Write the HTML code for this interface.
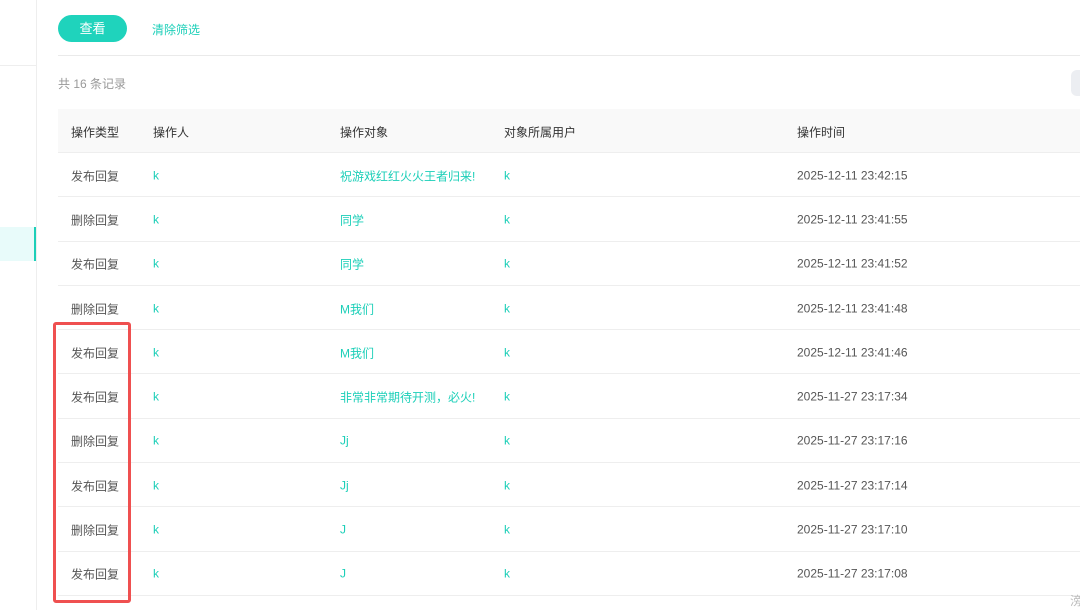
<!DOCTYPE html>
<html><head><meta charset="utf-8"><style>
*{margin:0;padding:0;box-sizing:border-box}
body{width:1080px;height:610px;background:#fff;font-family:"Liberation Sans","Noto Sans CJK SC",sans-serif;font-size:12px;color:#555;position:relative;overflow:hidden}
.side{position:absolute;left:0;top:0;width:37px;height:610px;border-right:1px solid #eee}
.side .hl{position:absolute;left:0;top:65px;width:36px;border-top:1px solid #eee}
.side .sel{position:absolute;left:0;top:227px;width:36px;height:34px;background:#e8fbfa;border-right:2px solid #1ccfb8}
.btn{position:absolute;left:58px;top:15px;width:69px;height:27px;border-radius:14px;background:#1fd3bc;color:#fff;font-size:13px;text-align:center;line-height:27px}
.clr{position:absolute;left:152px;top:21px;color:#1ccfb8;font-size:12px}
.div{position:absolute;left:58px;right:0;top:55px;border-top:1px solid #eaeaea}
.cnt{position:absolute;left:58px;top:75px;color:#999}
.pill{position:absolute;left:1071px;top:70px;width:20px;height:26px;border-radius:6px;background:#eceef2}
.tbl{position:absolute;left:58px;right:0;top:109px}
.row{height:44.3px;border-bottom:1px solid #eee;position:relative}
.row.h{height:44px;background:#f9f9f9;color:#333}
.row span{position:absolute;top:50%;transform:translateY(-45%);white-space:nowrap}
.c1{left:13px}.c2{left:95px}.c3{left:282px}.c4{left:446px}.c5{left:739px}
.t{color:#1ccfb8}
.red{position:absolute;left:53px;top:322px;width:78px;height:281px;border:3px solid #ef5050;border-radius:3px}
.wm{position:absolute;left:1070px;top:592px;color:#bbb;font-size:12px}
</style></head><body>
<div class="side"><div class="hl"></div><div class="sel"></div></div>
<div class="btn">查看</div>
<div class="clr">清除筛选</div>
<div class="div"></div>
<div class="cnt">共 16 条记录</div>
<div class="pill"></div>
<div class="tbl">
<div class="row h"><span class="c1">操作类型</span><span class="c2">操作人</span><span class="c3">操作对象</span><span class="c4">对象所属用户</span><span class="c5">操作时间</span></div>
<div class="row"><span class="c1">发布回复</span><span class="c2 t">k</span><span class="c3 t">祝游戏红红火火王者归来!</span><span class="c4 t">k</span><span class="c5">2025-12-11 23:42:15</span></div>
<div class="row"><span class="c1">删除回复</span><span class="c2 t">k</span><span class="c3 t">同学</span><span class="c4 t">k</span><span class="c5">2025-12-11 23:41:55</span></div>
<div class="row"><span class="c1">发布回复</span><span class="c2 t">k</span><span class="c3 t">同学</span><span class="c4 t">k</span><span class="c5">2025-12-11 23:41:52</span></div>
<div class="row"><span class="c1">删除回复</span><span class="c2 t">k</span><span class="c3 t">M我们</span><span class="c4 t">k</span><span class="c5">2025-12-11 23:41:48</span></div>
<div class="row"><span class="c1">发布回复</span><span class="c2 t">k</span><span class="c3 t">M我们</span><span class="c4 t">k</span><span class="c5">2025-12-11 23:41:46</span></div>
<div class="row"><span class="c1">发布回复</span><span class="c2 t">k</span><span class="c3 t">非常非常期待开测，必火!</span><span class="c4 t">k</span><span class="c5">2025-11-27 23:17:34</span></div>
<div class="row"><span class="c1">删除回复</span><span class="c2 t">k</span><span class="c3 t">Jj</span><span class="c4 t">k</span><span class="c5">2025-11-27 23:17:16</span></div>
<div class="row"><span class="c1">发布回复</span><span class="c2 t">k</span><span class="c3 t">Jj</span><span class="c4 t">k</span><span class="c5">2025-11-27 23:17:14</span></div>
<div class="row"><span class="c1">删除回复</span><span class="c2 t">k</span><span class="c3 t">J</span><span class="c4 t">k</span><span class="c5">2025-11-27 23:17:10</span></div>
<div class="row"><span class="c1">发布回复</span><span class="c2 t">k</span><span class="c3 t">J</span><span class="c4 t">k</span><span class="c5">2025-11-27 23:17:08</span></div>
</div>
<div class="red"></div>
<div class="wm">滂</div>
</body></html>
